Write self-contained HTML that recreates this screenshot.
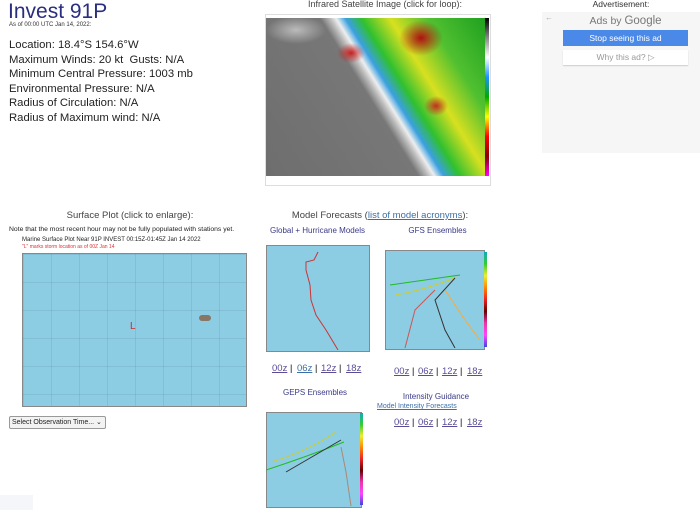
<!DOCTYPE html>
<html><head><style>
body{margin:0;width:700px;height:520px;background:#fff;font-family:"Liberation Sans",sans-serif;position:relative;overflow:hidden}
.a{position:absolute}
h1{position:absolute;left:8px;top:0;margin:0;font-size:21px;font-weight:normal;color:#2a2e7e}
.info{left:9px;top:38px;font-size:11.3px;line-height:14.6px;color:#222}
.ctr{text-align:center;color:#444;font-size:9px}
.map{background:#8ccde4;border:1px solid #888}
a{color:#3b6fa8}
.lk{font-size:9.5px;color:#5b4c98;text-decoration:underline}
</style></head><body>
<h1>Invest 91P</h1>
<div class="a" style="left:9px;top:22px;font-size:6px;color:#333">As of 00:00 UTC Jan 14, 2022:</div>
<div class="a info">Location: 18.4°S 154.6°W<br>Maximum Winds: 20 kt&nbsp; Gusts: N/A<br>Minimum Central Pressure: 1003 mb<br>Environmental Pressure: N/A<br>Radius of Circulation: N/A<br>Radius of Maximum wind: N/A</div>

<div class="a ctr" style="left:260px;width:250px;top:-1px;font-size:9px">Infrared Satellite Image (click for loop):</div>
<div class="a" style="left:265px;top:14px;width:224px;height:170px;background:#fff;border:1px solid #ddd"></div>
<div class="a" style="left:266px;top:18px;width:219px;height:158px;background:
radial-gradient(ellipse 22px 18px at 155px 20px,#b01010,transparent),
radial-gradient(ellipse 14px 10px at 85px 35px,#c82020,transparent),
radial-gradient(ellipse 12px 10px at 170px 88px,#c03020,transparent),
radial-gradient(ellipse 30px 14px at 30px 12px,#bbb,transparent),
linear-gradient(58deg,#6e6e6e 0%,#777 48%,#bbb 51%,#eee 53%,#3aa0e0 56%,#30c030 61%,#d8e020 70%,#50c030 82%,#20a020 100%)"></div>
<div class="a" style="left:485px;top:18px;width:4px;height:158px;background:linear-gradient(#000,#888,#fff,#1e90ff,#0a0,#ff0,#f00,#800,#f0f)"></div>

<div class="a ctr" style="left:542px;width:158px;top:-1px;font-size:8.5px;color:#333">Advertisement:</div>
<div class="a" style="left:542px;top:12px;width:158px;height:141px;background:#f6f6f6"></div>
<div class="a" style="left:545px;top:13px;font-size:8px;color:#aaa">←</div>
<div class="a" style="left:563px;top:15px;width:125px;text-align:center;font-size:10.5px;color:#777">Ads by <span style="font-size:11.5px">Google</span></div>
<div class="a" style="left:563px;top:30px;width:125px;height:16px;background:#4a89e8;color:#fff;font-size:8.5px;text-align:center;line-height:16px">Stop seeing this ad</div>
<div class="a" style="left:563px;top:50px;width:125px;height:15px;background:#fff;color:#999;font-size:8.5px;text-align:center;line-height:15px;box-shadow:0 1px 1px #ccc">Why this ad? ▷</div>

<div class="a ctr" style="left:0;width:260px;top:210px;font-size:9.5px">Surface Plot (click to enlarge):</div>
<div class="a" style="left:9px;top:226px;font-size:6.8px;color:#222">Note that the most recent hour may not be fully populated with stations yet.</div>
<div class="a" style="left:22px;top:237px;font-size:6px;color:#222">Marine Surface Plot Near 91P INVEST 00:15Z-01:45Z Jan 14 2022</div>
<div class="a" style="left:22px;top:244px;font-size:5px;color:#d33">"L" marks storm location as of 00Z Jan 14</div>
<div class="a map" style="left:22px;top:253px;width:223px;height:152px;background-image:linear-gradient(90deg,rgba(0,0,0,.07) 1px,transparent 1px),linear-gradient(rgba(0,0,0,.07) 1px,transparent 1px);background-size:28px 28px;background-color:#8ccde4"></div>
<div class="a" style="left:130px;top:321px;color:#d22;font-size:10px">L</div>
<div class="a" style="left:199px;top:315px;width:12px;height:6px;background:#887766;border-radius:3px"></div>
<div class="a" style="left:9px;top:416px;width:93px;height:11px;border:1px solid #999;border-radius:2px;font-size:7px;color:#222;line-height:11px;padding-left:2px;background:#f3f3f3">Select Observation Time... ⌄</div>

<div class="a ctr" style="left:255px;width:250px;top:210px;font-size:9.5px">Model Forecasts (<a style="text-decoration:underline">list of model acronyms</a>):</div>
<div class="a ctr" style="left:255px;width:125px;top:226px;font-size:8px;color:#3a3a88">Global + Hurricane Models</div>
<div class="a ctr" style="left:380px;width:115px;top:226px;font-size:8px;color:#3a3a88">GFS Ensembles</div>
<div class="a map" style="left:266px;top:245px;width:102px;height:105px"></div>
<svg class="a" style="left:266px;top:245px" width="102" height="105"><path d="M52 7 L48 15 L40 17 L40 25 L44 40 L45 55 L50 70 L60 85 L72 105" fill="none" stroke="#c33" stroke-width="1"/></svg>
<div class="a map" style="left:385px;top:250px;width:98px;height:98px"></div>
<svg class="a" style="left:385px;top:250px" width="98" height="98"><g fill="none" stroke-width="1"><path d="M5 35 Q40 30 75 25" stroke="#2b2"/><path d="M10 45 Q40 40 72 27" stroke="#cc3"/><path d="M70 28 L50 50 L60 80 L70 98" stroke="#333"/><path d="M50 40 L30 60 L20 98" stroke="#c55"/><path d="M60 40 L80 70 L95 90" stroke="#fa3"/></g></svg>
<div class="a" style="left:484px;top:252px;width:3px;height:95px;background:linear-gradient(#1ab,#3c3,#ee3,#f80,#e22,#600,#e3a,#f4f,#44d)"></div>
<div class="a lk" style="left:272px;top:363px">00z</div><div class="a" style="left:290px;top:363px;font-size:9px">|</div>
<div class="a lk" style="left:297px;top:363px;color:#3b6fa8">06z</div><div class="a" style="left:315px;top:363px;font-size:9px">|</div>
<div class="a lk" style="left:321px;top:363px">12z</div><div class="a" style="left:339px;top:363px;font-size:9px">|</div>
<div class="a lk" style="left:346px;top:363px">18z</div>
<div class="a lk" style="left:394px;top:366px">00z</div><div class="a" style="left:412px;top:366px;font-size:9px">|</div>
<div class="a lk" style="left:418px;top:366px">06z</div><div class="a" style="left:436px;top:366px;font-size:9px">|</div>
<div class="a lk" style="left:442px;top:366px">12z</div><div class="a" style="left:460px;top:366px;font-size:9px">|</div>
<div class="a lk" style="left:467px;top:366px">18z</div>

<div class="a ctr" style="left:255px;width:120px;top:388px;font-size:8px;color:#3a3a88">GEPS Ensembles</div>
<div class="a ctr" style="left:375px;width:122px;top:392px;font-size:8px;color:#3a3a88">Intensity Guidance</div>
<div class="a" style="left:377px;top:403px;font-size:7px;color:#3b6fa8;text-decoration:underline">Model Intensity Forecasts</div>
<div class="a lk" style="left:394px;top:417px">00z</div><div class="a" style="left:412px;top:417px;font-size:9px">|</div>
<div class="a lk" style="left:418px;top:417px">06z</div><div class="a" style="left:436px;top:417px;font-size:9px">|</div>
<div class="a lk" style="left:442px;top:417px">12z</div><div class="a" style="left:460px;top:417px;font-size:9px">|</div>
<div class="a lk" style="left:467px;top:417px">18z</div>
<div class="a map" style="left:266px;top:412px;width:94px;height:94px"></div>
<svg class="a" style="left:266px;top:412px" width="94" height="94"><g fill="none" stroke-width="1"><path d="M0 58 Q40 45 78 30" stroke="#2b2"/><path d="M5 50 Q40 40 70 20" stroke="#cc3"/><path d="M20 60 L75 28" stroke="#333"/><path d="M75 35 L80 60 L85 94" stroke="#a87"/></g></svg>
<div class="a" style="left:360px;top:413px;width:3px;height:92px;background:linear-gradient(#1ab,#3c3,#ee3,#f80,#e22,#600,#e3a,#f4f,#44d)"></div>
<div class="a" style="left:0;top:495px;width:33px;height:15px;background:#f4f6fa"></div>
</body></html>
